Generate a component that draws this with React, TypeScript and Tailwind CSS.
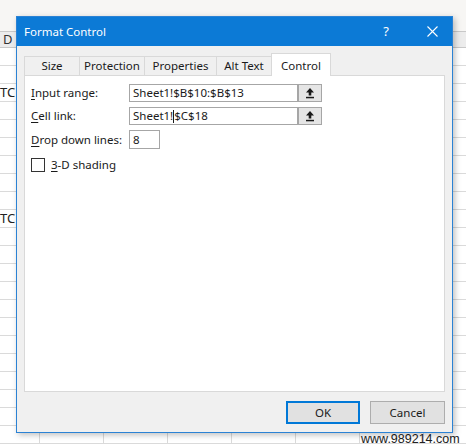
import React from 'react'

const ui = { fontFamily: '"Noto Sans", "Open Sans", sans-serif' }

function Sheet() {
  const rows = Array.from({ length: 22 })
  return (
    <div className="flex flex-col">
      <div className="h-[31px] bg-[#f7f6f4]" />
      <div className="flex h-[17px] border-y border-[#c8c8c8] bg-[#ececec] text-[13px] leading-[15px] text-[#333]">
        <div className="w-[39px] pl-[3px]">D</div>
      </div>
      {rows.map((_, i) => (
        <div key={i} className="flex h-[18px] border-b border-[#dadada] text-[13px] leading-[17px] text-[#222]">
          <div className="w-[39px] shrink-0">{i === 2 || i === 9 ? 'TC' : ''}</div>
          {Array.from({ length: 7 }).map((__, j) => (
            <div key={j} className="w-16 shrink-0 border-l border-[#dadada]" />
          ))}
        </div>
      ))}
    </div>
  )
}

function RefButton() {
  return (
    <div className="flex h-[18px] w-[24px] items-center justify-center border border-[#a6a6a6] bg-[#e5e5e5]">
      <svg width="10" height="12" viewBox="0 0 10 12">
        <path d="M5 1 L1 5.5 H3.7 V8.5 H6.3 V5.5 H9 Z" fill="#1a1a1a" />
        <rect x="1" y="9.8" width="8" height="1.5" fill="#1a1a1a" />
      </svg>
    </div>
  )
}

function Tab({ label, width, active }: { label: string; width: string; active?: boolean }) {
  if (active) {
    return (
      <div
        className={`${width} relative z-10 -mb-px flex h-[23px] items-start justify-center border-x border-t border-[#d9d9d9] bg-white pt-[3px] text-[11.5px] text-[#1a1a1a]`}
      >
        {label}
      </div>
    )
  }
  return (
    <div
      className={`${width} flex h-[19px] items-center justify-center border-l border-t border-[#d9d9d9] bg-[#f0f0f0] text-[11.5px] text-[#1a1a1a]`}
    >
      {label}
    </div>
  )
}

function Label({ k, rest }: { k: string; rest: string }) {
  return (
    <span className="text-[11.5px] leading-[16px] text-[#1a1a1a]">
      <span className="underline underline-offset-2">{k}</span>
      {rest}
    </span>
  )
}

export default function App() {
  return (
    <div className="relative h-[448px] w-[466px] overflow-hidden bg-white" style={ui}>
      <Sheet />

      <div
        className="absolute bottom-[2px] left-[361px] text-[12.5px] leading-[14px] text-[#222]"
        style={{ fontFamily: '"Liberation Sans", sans-serif' }}
      >
        www.989214.com
      </div>

      {/* dialog window */}
      <div className="absolute left-[16px] top-[16px] flex h-[417px] w-[437px] flex-col border border-[#2b82d4] bg-[#f0f0f0] shadow-[2px_2px_6px_rgba(0,0,0,0.25)]">
        <div className="flex h-[29px] shrink-0 items-center bg-[#0c7ad6] pl-[7px] pr-[14px] text-white">
          <span className="text-[11.5px]">Format Control</span>
          <span className="ml-auto mr-[38px] text-[13px]">?</span>
          <svg width="11" height="11" viewBox="0 0 11 11">
            <path d="M0.5 0.5 L10.5 10.5 M10.5 0.5 L0.5 10.5" stroke="white" strokeWidth="1.1" />
          </svg>
        </div>

        <div className="flex flex-1 flex-col px-[7px] pt-[7px]">
          <div className="flex items-end">
            <Tab label="Size" width="w-[55px]" />
            <Tab label="Protection" width="w-[65px]" />
            <Tab label="Properties" width="w-[72px]" />
            <Tab label="Alt Text" width="w-[55px]" />
            <Tab label="Control" width="w-[60px]" active />
          </div>

          <div className="flex h-[317px] flex-col gap-[5px] border border-[#d9d9d9] bg-white px-[6px] pt-[8px] text-[11.5px] leading-[16px]">
            <div className="flex items-center">
              <div className="w-[98px]">
                <Label k="I" rest="nput range:" />
              </div>
              <div className="flex h-[18px] w-[169px] items-center border border-[#a6a6a6] pl-[3px] text-[#1a1a1a]">
                Sheet1!$B$10:$B$13
              </div>
              <RefButton />
            </div>
            <div className="flex items-center">
              <div className="w-[98px]">
                <Label k="C" rest="ell link:" />
              </div>
              <div className="flex h-[18px] w-[169px] items-center border border-[#a6a6a6] pl-[3px] text-[#1a1a1a]">
                Sheet1!<span className="inline-block h-[13px] w-px bg-[#1a1a1a]" />$C$18
              </div>
              <RefButton />
            </div>
            <div className="flex items-center">
              <div className="w-[98px]">
                <Label k="D" rest="rop down lines:" />
              </div>
              <div className="flex h-[19px] w-[31px] items-center border border-[#a6a6a6] pl-[3px] text-[#1a1a1a]">
                8
              </div>
            </div>
            <div className="mt-[3px] flex items-center gap-[6px]">
              <div className="h-[14px] w-[14px] border border-[#333]" />
              <Label k="3" rest="-D shading" />
            </div>
          </div>

          <div className="flex justify-end gap-[10px] pt-[9px]">
            <button className="flex h-[23px] w-[74px] items-center justify-center border-2 border-[#0078d7] bg-[#e1e1e1] text-[11.5px] text-[#1a1a1a]">
              OK
            </button>
            <button className="flex h-[23px] w-[75px] items-center justify-center border border-[#adadad] bg-[#e1e1e1] text-[11.5px] text-[#1a1a1a]">
              Cancel
            </button>
          </div>
        </div>
      </div>
    </div>
  )
}
